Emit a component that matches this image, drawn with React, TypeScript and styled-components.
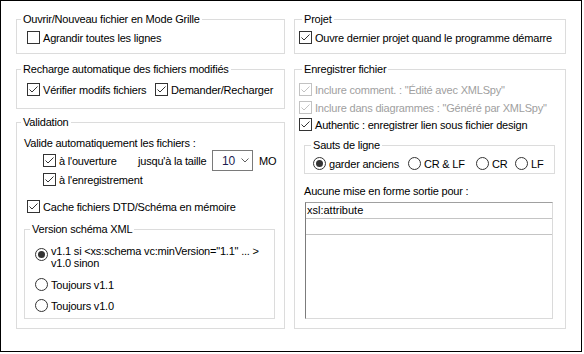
import React from "react";
import styled, { createGlobalStyle } from "styled-components";

const GlobalStyle = createGlobalStyle`
  html, body { margin: 0; padding: 0; background: #fff; }
  body {
    font-family: "Liberation Sans", Arial, sans-serif;
    font-size: 11px;
    letter-spacing: -0.2px;
    color: #000;
  }
  * { box-sizing: border-box; }
`;

const Frame = styled.div`
  width: 582px;
  height: 352px;
  border: 1px solid #000;
  background: #fff;
  display: flex;
  align-items: flex-start;
  gap: 9px;
  padding: 11px 0 0 15px;
`;

const Column = styled.div<{ $w: number }>`
  width: ${(p) => p.$w}px;
  display: flex;
  flex-direction: column;
`;

const Group = styled.fieldset<{ $mt?: number; $ml?: number; $mr?: number }>`
  margin: ${(p) => p.$mt ?? 0}px ${(p) => p.$mr ?? 0}px 0 ${(p) => p.$ml ?? 0}px;
  padding: 0;
  border: 1px solid #dcdcdc;
  min-width: 0;
`;

const Legend = styled.legend<{ $ml: number }>`
  margin-left: ${(p) => p.$ml}px;
  padding: 0 2px;
  line-height: 14px;
  height: 14px;
  white-space: nowrap;
`;

const Body = styled.div<{ $p: string }>`
  padding: ${(p) => p.$p};
  display: flex;
  flex-direction: column;
`;

const Row = styled.div<{ $mt?: number; $ml?: number; $h?: number }>`
  display: flex;
  align-items: center;
  height: ${(p) => p.$h ?? 17}px;
  margin-top: ${(p) => p.$mt ?? 0}px;
  margin-left: ${(p) => p.$ml ?? 0}px;
  white-space: nowrap;
`;

const Item = styled.label<{ $w?: number; $disabled?: boolean }>`
  display: flex;
  align-items: center;
  gap: 3px;
  ${(p) => (p.$w ? `width: ${p.$w}px; flex: none;` : "")}
  color: ${(p) => (p.$disabled ? "#a0a0a0" : "#000")};
  white-space: nowrap;
`;

const TopItem = styled.label`
  display: flex;
  align-items: flex-start;
  gap: 3px;
  line-height: 12px;
  white-space: nowrap;
`;

const Text = styled.span<{ $mt?: number; $ml?: number }>`
  display: block;
  line-height: 14px;
  margin-top: ${(p) => p.$mt ?? 0}px;
  margin-left: ${(p) => p.$ml ?? 0}px;
  white-space: nowrap;
`;

const Box = styled.span<{ $disabled?: boolean }>`
  width: 13px;
  height: 13px;
  flex: none;
  border: 1px solid ${(p) => (p.$disabled ? "#c2c2c2" : "#333")};
  background: #fff;
  display: flex;
  align-items: center;
  justify-content: center;
`;

const RadioCircle = styled.span<{ $mt?: number }>`
  width: 13px;
  height: 13px;
  flex: none;
  border: 1px solid #333;
  border-radius: 50%;
  background: #fff;
  display: flex;
  align-items: center;
  justify-content: center;
  margin-top: ${(p) => p.$mt ?? 0}px;
`;

const Dot = styled.span`
  width: 7px;
  height: 7px;
  border-radius: 50%;
  background: #333;
`;

const Combo = styled.div`
  width: 41px;
  height: 21px;
  border: 1px solid #7a7a7a;
  display: flex;
  align-items: center;
  padding-left: 9px;
  gap: 6px;
  color: #1c1c50;
  font-size: 12px;
  flex: none;
`;

const Unit = styled.span`
  margin-left: 6px;
`;

const ListBox = styled.div`
  margin: 4px 0 0 10px;
  width: 248px;
  height: 117px;
  border-top: 1px solid #a0a0a0;
  border-left: 1px solid #7c7c7c;
  border-right: 1px solid #dadada;
  border-bottom: 1px solid #dadada;
  display: flex;
  flex-direction: column;
`;

const ListRow = styled.div`
  height: 16px;
  border-bottom: 1px solid #c4c4c4;
  line-height: 15px;
  padding-left: 1px;
  letter-spacing: 0;
`;

const Check = ({ checked = true, disabled = false }: { checked?: boolean; disabled?: boolean }) => (
  <Box $disabled={disabled}>
    {checked && (
      <svg width="11" height="11" viewBox="0 0 11 11">
        <path d="M1.5 5.5 L4 8 L9.5 2.5" fill="none" stroke={disabled ? "#c2c2c2" : "#333"} strokeWidth="1" />
      </svg>
    )}
  </Box>
);

const Radio = ({ checked = false, mt }: { checked?: boolean; mt?: number }) => (
  <RadioCircle $mt={mt}>{checked && <Dot />}</RadioCircle>
);

const Chevron = () => (
  <svg width="8" height="5" viewBox="0 0 8 5">
    <path d="M0.5 0.5 L4 4 L7.5 0.5" fill="none" stroke="#606060" strokeWidth="1" />
  </svg>
);

export default function App() {
  return (
    <>
      <GlobalStyle />
      <Frame>
        <Column $w={269}>
          <Group>
            <Legend $ml={4}>Ouvrir/Nouveau fichier en Mode Grille</Legend>
            <Body $p="3px 0 7px 10px">
              <Row>
                <Item>
                  <Check checked={false} />
                  Agrandir toutes les lignes
                </Item>
              </Row>
            </Body>
          </Group>

          <Group $mt={8}>
            <Legend $ml={4}>Recharge automatique des fichiers modifiés</Legend>
            <Body $p="5px 0 10px 10px">
              <Row>
                <Item $w={128}>
                  <Check />
                  Vérifier modifs fichiers
                </Item>
                <Item>
                  <Check />
                  Demander/Recharger
                </Item>
              </Row>
            </Body>
          </Group>

          <Group $mt={6}>
            <Legend $ml={4}>Validation</Legend>
            <Body $p="7px 9px 9px 7px">
              <Text>Valide automatiquement les fichiers :</Text>
              <Row $h={21} $ml={19}>
                <Item $w={95}>
                  <Check />
                  à l'ouverture
                </Item>
                <Item $w={74}>jusqu'à la taille</Item>
                <Combo>
                  10
                  <Chevron />
                </Combo>
                <Unit>MO</Unit>
              </Row>
              <Row $ml={19}>
                <Item>
                  <Check />
                  à l'enregistrement
                </Item>
              </Row>
              <Row $mt={10} $ml={3}>
                <Item>
                  <Check />
                  Cache fichiers DTD/Schéma en mémoire
                </Item>
              </Row>
              <Group $mt={7}>
                <Legend $ml={5}>Version schéma XML</Legend>
                <Body $p="9px 0 4px 10px">
                  <TopItem>
                    <Radio checked mt={3} />
                    <span>
                      v1.1 si &lt;xs:schema vc:minVersion="1.1" ... &gt;
                      <br />
                      v1.0 sinon
                    </span>
                  </TopItem>
                  <Row $mt={7}>
                    <Item>
                      <Radio />
                      Toujours v1.1
                    </Item>
                  </Row>
                  <Row $mt={4}>
                    <Item>
                      <Radio />
                      Toujours v1.0
                    </Item>
                  </Row>
                </Body>
              </Group>
            </Body>
          </Group>
        </Column>

        <Column $w={272}>
          <Group>
            <Legend $ml={7}>Projet</Legend>
            <Body $p="3px 0 7px 4px">
              <Row>
                <Item>
                  <Check />
                  Ouvre dernier projet quand le programme démarre
                </Item>
              </Row>
            </Body>
          </Group>

          <Group $mt={8}>
            <Legend $ml={7}>Enregistrer fichier</Legend>
            <Body $p="5px 0 9px 0">
              <Row $ml={4}>
                <Item $disabled>
                  <Check disabled />
                  Inclure comment. : "Édité avec XMLSpy"
                </Item>
              </Row>
              <Row $mt={1} $ml={4}>
                <Item $disabled>
                  <Check disabled />
                  Inclure dans diagrammes : "Généré par XMLSpy"
                </Item>
              </Row>
              <Row $ml={4}>
                <Item>
                  <Check />
                  Authentic : enregistrer lien sous fichier design
                </Item>
              </Row>
              <Group $mt={5} $ml={9} $mr={10}>
                <Legend $ml={6}>Sauts de ligne</Legend>
                <Body $p="3px 0 1px 8px">
                  <Row>
                    <Item $w={95}>
                      <Radio checked />
                      garder anciens
                    </Item>
                    <Item $w={68}>
                      <Radio />
                      CR &amp; LF
                    </Item>
                    <Item $w={39}>
                      <Radio />
                      CR
                    </Item>
                    <Item>
                      <Radio />
                      LF
                    </Item>
                  </Row>
                </Body>
              </Group>
              <Text $mt={10} $ml={9}>Aucune mise en forme sortie pour :</Text>
              <ListBox>
                <ListRow>xsl:attribute</ListRow>
                <ListRow />
              </ListBox>
            </Body>
          </Group>
        </Column>
      </Frame>
    </>
  );
}
